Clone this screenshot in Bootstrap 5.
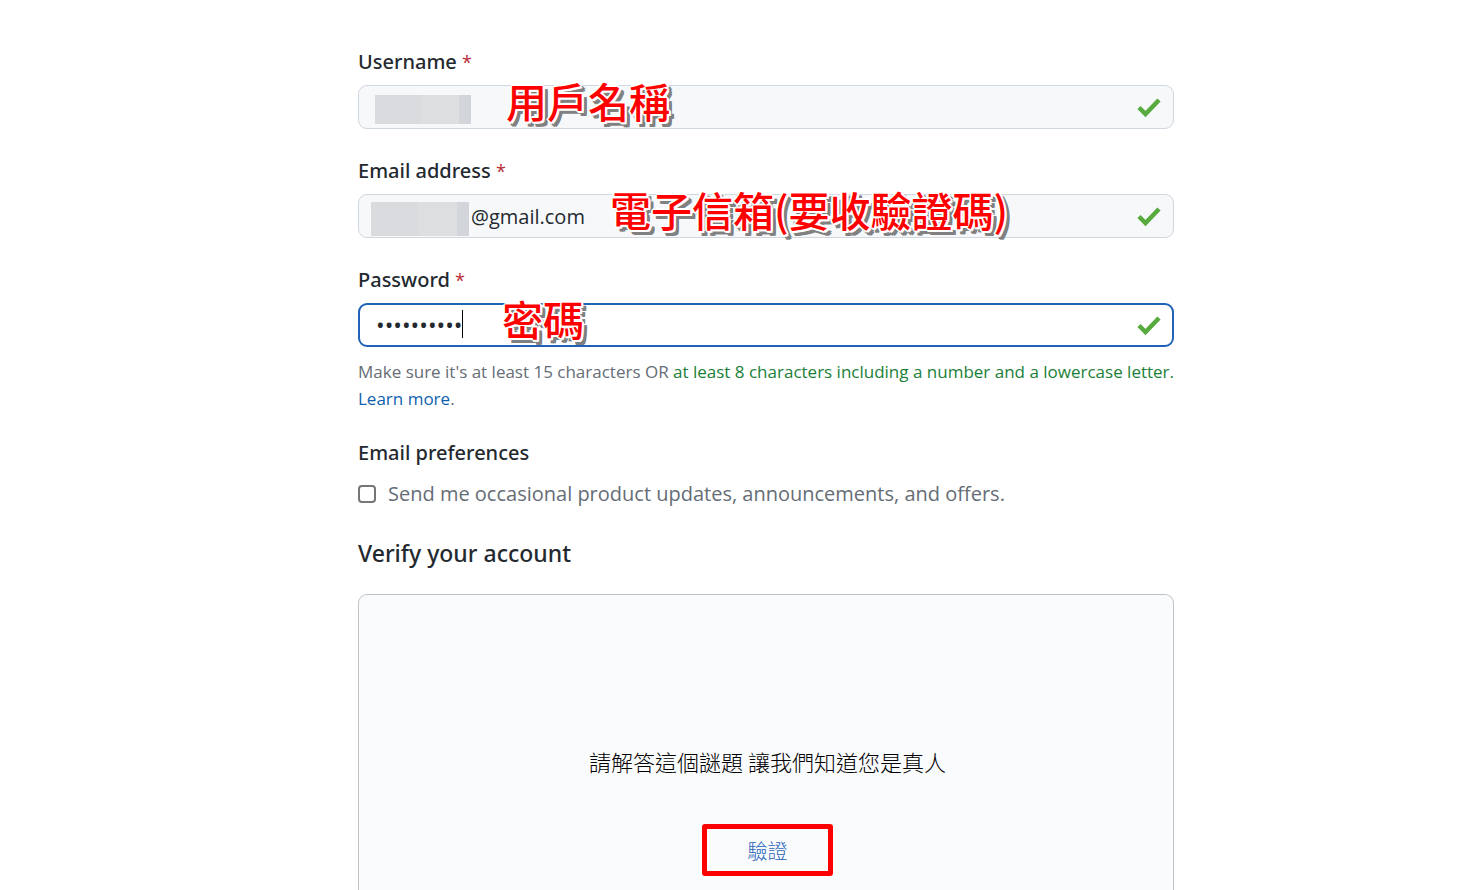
<!DOCTYPE html>
<html lang="en">
<head>
<meta charset="utf-8">
<meta name="viewport" content="width=device-width, initial-scale=1">
<title>Create your account</title>
<link href="https://cdn.jsdelivr.net/npm/bootstrap@5.3.0/dist/css/bootstrap.min.css" rel="stylesheet">
<style>
  body { font-family: "Open Sans", "Noto Sans", "Noto Sans CJK TC", sans-serif; font-size: 20px; line-height: 28px; color: #24292f; background: #fff; }
  .page-grid { display: grid; grid-template-columns: 358fr 816fr 285fr; }
  .signup { grid-column: 2; padding-top: 48px; min-width: 0; }
  .field { margin-bottom: 28px; }
  .field-label { display: block; margin-bottom: 9px; }
  .field-label, .prefs, .verify { font-family: "Noto Sans", sans-serif; font-weight: 500; }
  .req { color: #b92c36; font-family: "Open Sans", sans-serif; font-size: 18px; font-weight: 400; }
  .field-input { height: 44px; padding: 0 48px 0 16px; font-size: 20px; line-height: 28px; color: #24292f; background: #f6f8fa; border: 1px solid #d0d7de; border-radius: 9px; }
  .field-input.email { padding-left: 112px; }
  .field-input.current, .field-input.current:focus { font-size: 23px; background: #fff; border: 2px solid #1f62b8; box-shadow: none; }
  .tick { position: absolute; right: 12px; top: 10px; width: 26px; height: 24px; }
  .mosaic { position: absolute; background: linear-gradient(90deg, #d9dbde 0 48%, #dcdee0 48% 88%, #d2d5d9 88%); }
  .mosaic-user { left: 17px; top: 10px; width: 96px; height: 29px; }
  .mosaic-mail { left: 13px; top: 8px; width: 98px; height: 34px; }
  .caret { position: absolute; left: 104px; top: 7px; width: 1px; height: 28px; background: #000; }
  .note { position: absolute; top: -5px; font-family: "Noto Sans CJK TC", sans-serif; font-size: 41px; line-height: 40px; font-weight: 500; color: #f00; white-space: nowrap; pointer-events: none;
    text-shadow: 2px 0 #fff, -2px 0 #fff, 0 2px #fff, 0 -2px #fff, 1px 1px #fff, -1px -1px #fff, 1px -1px #fff, -1px 1px #fff, 2px 2px #fff,
      4px 4px #808080, 5px 5px #808080, 5px 3px #808080, 3px 5px #808080; }
  .note-user { left: 148px; }
  .note-mail { left: 252px; }
  .note-pass { left: 144px; }
  .help { font-size: 17px; line-height: 27px; color: #656d76; margin: -17px 0 27px; }
  .ok { color: #1a7f37; }
  .help a { color: #0f5fae; text-decoration: none; }
  .prefs { font-size: 20px; line-height: 28px; margin: 0 0 13px; }
  .opt { color: #656d76; }
  .opt input { appearance: none; width: 18px; height: 18px; border: 2px solid #767676; border-radius: 4px; background: #fff; margin: 0; }
  .verify { font-size: 23px; line-height: 32px; margin: 29px 0 25px; }
  .puzzle { border: 1px solid #bfc2c5; border-bottom: 0; border-radius: 9px 9px 0 0; background: #fafbfd; padding: 150px 0 14px 3px; color: #000; font-family: "Noto Sans CJK TC", sans-serif; font-weight: 300; }
  .puzzle p { font-size: 22px; line-height: 32px; margin: 0 0 47px; }
  .verify-btn { width: 131px; height: 52px; border: 5px solid #f00; border-radius: 3px; background: #fafbfd; color: #1f62b8; font-size: 20px; line-height: 28px; font-weight: 300; padding: 2px 0 0; }
</style>
</head>
<body>
<main class="page-grid min-vh-100">
  <form class="signup d-flex flex-column">
    <div class="field">
      <label class="field-label" for="user">Username <span class="req">*</span></label>
      <div class="position-relative">
        <input class="form-control field-input" id="user" type="text">
        <span class="mosaic mosaic-user"></span>
        <span class="note note-user">用戶名稱</span>
        <svg class="tick" viewBox="0 0 26 24" aria-hidden="true"><path d="M3 12.500L9.500 19L23 5" fill="none" stroke="#57ab3e" stroke-width="4.500"/></svg>
      </div>
    </div>
    <div class="field">
      <label class="field-label" for="email">Email address <span class="req">*</span></label>
      <div class="position-relative">
        <input class="form-control field-input email" id="email" type="text" value="@gmail.com">
        <span class="mosaic mosaic-mail"></span>
        <span class="note note-mail">電子信箱(要收驗證碼)</span>
        <svg class="tick" viewBox="0 0 26 24" aria-hidden="true"><path d="M3 12.500L9.500 19L23 5" fill="none" stroke="#57ab3e" stroke-width="4.500"/></svg>
      </div>
    </div>
    <div class="field">
      <label class="field-label" for="pass">Password <span class="req">*</span></label>
      <div class="position-relative">
        <input class="form-control field-input current" id="pass" type="password" value="abcdefgh12">
        <span class="caret"></span>
        <span class="note note-pass">密碼</span>
        <svg class="tick" viewBox="0 0 26 24" aria-hidden="true"><path d="M3 12.500L9.500 19L23 5" fill="none" stroke="#57ab3e" stroke-width="4.500"/></svg>
      </div>
    </div>
    <p class="help text-nowrap">Make sure it's at least 15 characters OR <span class="ok">at least 8 characters including a number and a lowercase letter.</span> <br><a href="#">Learn more</a>.</p>
    <h2 class="prefs">Email preferences</h2>
    <div class="opt d-flex align-items-center">
      <input type="checkbox" id="updates">
      <label class="ps-2 ms-1" for="updates">Send me occasional product updates, announcements, and offers.</label>
    </div>
    <h2 class="verify">Verify your account</h2>
    <section class="puzzle flex-grow-1 text-center" lang="zh-Hant">
      <p>請解答這個謎題 讓我們知道您是真人</p>
      <button class="verify-btn" type="button">驗證</button>
    </section>
  </form>
</main>
<script src="https://cdn.jsdelivr.net/npm/bootstrap@5.3.0/dist/js/bootstrap.bundle.min.js"></script>
</body>
</html>
